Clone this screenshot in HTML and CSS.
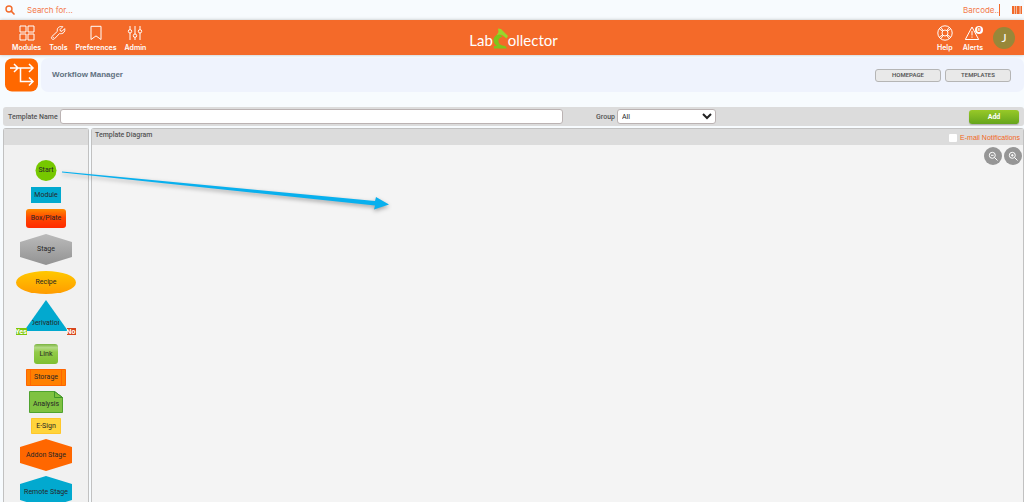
FILE: index.html
```html
<!DOCTYPE html>
<html lang="en">
<head>
<meta charset="utf-8">
<title>LabCollector - Workflow Manager</title>
<link rel="stylesheet" href="styles.css">
</head>
<body>
<div class="search-bar">
  <label class="search">
    <svg class="search-icon" viewBox="0 0 10 10" aria-label="Search"><circle cx="4" cy="4" r="3" fill="none" stroke="currentColor" stroke-width="1.4"/><path d="M6.2 6.2 9 9" stroke="currentColor" stroke-width="1.7" stroke-linecap="round"/></svg>
    <input type="text" placeholder="Search for...">
  </label>
  <label class="barcode">
    <input type="text" placeholder="Barcode...">
    <svg class="barcode-icon" viewBox="0 0 10 8" aria-label="Scan barcode"><path d="M0 0h2v8H0zM3 0h1v8H3zM5 0h2v8H5zM7.6 0h.6v8h-.6zM9 0h1v8H9z" fill="currentColor"/><path d="M0 0h10v8H0z" fill="currentColor" opacity=".45"/></svg>
  </label>
</div>

<header class="main-bar">
  <nav class="menu">
    <a href="#">
      <svg viewBox="0 0 16 16"><path d="M1 1h6v6H1zM9 1h6v6H9zM1 9h6v6H1zM9 9h6v6H9z"/></svg>
      <span>Modules</span>
    </a>
    <a href="#">
      <svg viewBox="0 0 16 16"><path d="M12.800 1.700 10.100 4.400l.3 1.600 1.600.3 2.700-2.700c.7 2.300-.8 4.900-3.400 5.100-.6.1-1.200 0-1.700-.2l-5.200 5.400c-1.700 1.500-4-.7-2.500-2.400l5.500-5.200C6.500 3.200 9.300.7 12.800 1.700z"/><circle cx="3.300" cy="12.700" r=".3"/></svg>
      <span>Tools</span>
    </a>
    <a href="#">
      <svg viewBox="0 0 16 16"><path d="M3 1.300h10v13.200l-5-3.600-5 3.600z"/></svg>
      <span>Preferences</span>
    </a>
    <a href="#">
      <svg viewBox="0 0 16 16"><path d="M3 1v3.500M3 8v7M8 1v8M8 12.500V15M13 1v3.500M13 8v7"/><circle cx="3" cy="6.300" r="1.700"/><circle cx="8" cy="10.700" r="1.700"/><circle cx="13" cy="6.300" r="1.700"/></svg>
      <span>Admin</span>
    </a>
  </nav>
  <a class="brand" href="#">
    <span>Lab</span>
    <svg class="brand-mark" viewBox="0 0 15 21" aria-hidden="true"><path d="M6 6C-1 8-1 14.500 4 18H1v2.500h13L12.500 18C5 18 2.500 11 9.500 8.500z" fill="#7fc41c"/><path d="m5 .5 3 .5 7 7-1.500 2.500L9 7 6 6.500 3.500 7.500 5.500 4z" fill="#98d62c"/></svg>
    <span>ollector</span>
  </a>
  <nav class="menu account">
    <a href="#">
      <svg viewBox="0 0 16 16"><circle cx="8" cy="8" r="7.200"/><circle cx="8" cy="8" r="3"/><path d="m2.500 4 3.300 2.300M4 2.500l2.300 3.300M12 2.500 9.700 5.800M13.500 4l-3.300 2.300M2.500 12l3.300-2.300M4 13.500l2.300-3.300M13.500 12l-3.300-2.300M12 13.500l-2.300-3.300"/></svg>
      <span>Help</span>
    </a>
    <a href="#" class="alerts">
      <svg viewBox="0 0 16 16"><path d="M7 2 .3 14.500h13.400zM7 6v4.500M7 11.500v1.200"/></svg>
      <b class="badge">0</b>
      <span>Alerts</span>
    </a>
    <a href="#" class="avatar">J</a>
  </nav>
</header>

<section class="page-head">
  <svg class="page-icon" viewBox="0 0 33 33" aria-hidden="true"><rect width="33" height="33" rx="7" fill="#ff6800"/><path d="M5 9.500h23M15.500 9.500V23H28M9 5.500l4 4-4 4M24 5.500l4 4-4 4M24 19l4 4-4 4" fill="none" stroke="#fff" stroke-width="1.500"/></svg>
  <div class="page-title">
    <h1>Workflow Manager</h1>
    <button type="button">HOMEPAGE</button>
    <button type="button">TEMPLATES</button>
  </div>
</section>

<main>
  <form class="template-form">
    <label for="name">Template Name</label>
    <input id="name" type="text">
    <label for="group" class="group-label">Group</label>
    <select id="group"><option>All</option></select>
    <button type="button">Add</button>
  </form>

  <div class="workspace">
    <section class="panel">
      <div class="panel-head"></div>
      <div class="palette">
        <div class="shapes">
          <svg width="22" height="21"><circle cx="11" cy="10.500" r="10.500" fill="#76c800"/><text x="11" y="12">Start</text></svg>
          <svg width="30" height="16"><rect width="30" height="16" fill="#02a9cf"/><text x="15" y="10">Module</text></svg>
          <svg width="40" height="19"><defs><linearGradient id="red" x2="0" y2="1"><stop stop-color="#ff8a00"/><stop offset=".45" stop-color="#ff4800"/><stop offset="1" stop-color="#ff2a00"/></linearGradient></defs><rect width="40" height="19" rx="3" fill="url(#red)"/><text x="20" y="11">Box/Plate</text></svg>
          <svg width="52" height="31"><defs><linearGradient id="grey" x2="0" y2="1"><stop stop-color="#bbb"/><stop offset="1" stop-color="#929292"/></linearGradient></defs><path d="m26 0 26 8v15l-26 8-26-8V8z" fill="url(#grey)"/><text x="26" y="17">Stage</text></svg>
          <svg width="60" height="23"><defs><linearGradient id="gold" x2="0" y2="1"><stop stop-color="#ffc800"/><stop offset="1" stop-color="#ff9c00"/></linearGradient></defs><ellipse cx="30" cy="11.500" rx="30" ry="11.500" fill="url(#gold)"/><text x="30" y="13">Recipe</text></svg>
          <svg width="60" height="38"><defs><clipPath id="label-box"><path d="M16 16h27v14H16z"/></clipPath></defs><path d="m30 0 22 31H8z" fill="#02a9cf"/><g clip-path="url(#label-box)"><text x="30" y="25">Derivation</text></g><path d="M0 28h11v7H0z" fill="#7cc60c"/><path d="M51 28h9v7h-9z" fill="#d8451c"/><text class="tag" x="5" y="34">Yes</text><text class="tag" x="55" y="34">No</text></svg>
        </div>
        <div class="shapes compact">
          <svg width="24" height="20"><defs><linearGradient id="green" x2="0" y2="1"><stop stop-color="#7ab340"/><stop offset=".18" stop-color="#b4da86"/><stop offset=".4" stop-color="#93cb49"/><stop offset="1" stop-color="#7ebf32"/></linearGradient></defs><rect width="24" height="20" rx="3" fill="url(#green)"/><text x="12" y="12">Link</text></svg>
          <svg width="40" height="17"><path d="M.5.500h39v16H.5zM4.500.500v16M35.500.500v16" fill="#ff8000" stroke="#ff6500"/><text x="20" y="10">Storage</text></svg>
          <svg width="34" height="22"><path d="M.5.500h25l8 6v15H.5z" fill="#7fc241" stroke="#4fa32e"/><path d="M25.500.500v6h8z" fill="#7fc241" stroke="#3f932a"/><text x="17" y="15">Analysis</text></svg>
          <svg width="30" height="16"><path d="M.5.500h29v15H.5z" fill="#ffd43b" stroke="#ffc72a"/><text x="15" y="10">E-Sign</text></svg>
          <svg width="52" height="32"><path d="m26 0 26 8v16l-26 8-26-8V8z" fill="#ff6700"/><text x="26" y="18">Addon Stage</text></svg>
          <svg width="52" height="32"><path d="m26 0 26 8v16l-26 8-26-8V8z" fill="#02a9cf"/><text x="26" y="18">Remote Stage</text></svg>
        </div>
      </div>
    </section>
    <section class="panel diagram">
      <div class="panel-head">
        <h2>Template Diagram</h2>
        <label class="notify"><input type="checkbox">E-mail Notifications</label>
      </div>
      <div class="zoom-tools">
        <button type="button" aria-label="Zoom out"><svg viewBox="0 0 10 10"><circle cx="4.300" cy="4.300" r="3"/><path d="m6.500 6.500 3 3M3 4.300h2.600"/></svg></button>
        <button type="button" aria-label="Zoom in"><svg viewBox="0 0 10 10"><circle cx="4.300" cy="4.300" r="3"/><path d="m6.500 6.500 3 3M3 4.300h2.600M4.300 3v2.600"/></svg></button>
      </div>
    </section>
    <svg class="drag-arrow" viewBox="0 0 340 60" aria-hidden="true"><path d="M8 15.500 321 45l1-4 13 7.500-15 5 1-4L8 16.500z" fill="#08b0ee"/></svg>
  </div>
</main>
</body>
</html>
```
FILE: styles.css
```css
* { box-sizing: border-box; }
body {
  margin: 0;
  min-height: 100vh;
  display: flex;
  flex-direction: column;
  overflow: hidden;
  background: #f7fbfe;
  color: #555;
  font: 7px/10px Roboto, sans-serif;
}
a { color: inherit; text-decoration: none; }
h1, h2 { margin: 0; }
input, select, button { font: inherit; color: inherit; }

.search-bar {
  display: flex;
  justify-content: space-between;
  align-items: center;
  height: 20px;
  padding: 0 2px 0 5px;
  color: #f26a2a;
  font: 8px/12px Inter, sans-serif;
}
.search, .barcode { display: flex; align-items: center; }
.search { gap: 12px; }
.barcode { gap: 12px; }
.search-bar input {
  padding: 0;
  border: 0;
  background: none;
  outline: 0;
}
.search input { width: 200px; }
.barcode input { width: 37px; border-right: 1px solid #f26a2a; }
.search-bar input::placeholder { color: #f4794a; opacity: 1; }
.search-icon { width: 10px; height: 10px; }
.barcode-icon { width: 10px; height: 8px; }

.main-bar {
  display: grid;
  grid-template-columns: 1fr auto 1fr;
  align-items: center;
  height: 35px;
  padding: 0 9px 0 12px;
  background: #f46a29;
  color: #fff;
  box-shadow: 0 0 3px #8888;
}
.menu { display: flex; align-items: center; gap: 8px; }
.menu a {
  display: flex;
  flex-direction: column;
  align-items: center;
  gap: 2px;
  padding-top: 2px;
  font: 600 7px/10px Inter, sans-serif;
}
.menu svg {
  width: 16px;
  height: 16px;
  fill: none;
  stroke: #fff;
  stroke-width: 1;
  stroke-linejoin: round;
}
.account { justify-content: flex-end; gap: 10px; }
.menu .alerts { position: relative; }
.badge {
  position: absolute;
  top: 3px;
  right: 0;
  width: 8px;
  height: 8px;
  border-radius: 50%;
  background: #fff;
  color: #f46a29;
  font: 700 7px/8px Roboto, sans-serif;
  text-align: center;
}
.menu .avatar {
  justify-content: center;
  width: 22px;
  height: 22px;
  padding: 0;
  border-radius: 50%;
  background: #988739;
  font: 12px/22px Lato, sans-serif;
}
.brand {
  display: flex;
  align-items: flex-end;
  padding-top: 1px;
  font: 400 15px/18px Lato, sans-serif;
}
.brand-mark { width: 15px; height: 21px; }

.page-head {
  display: flex;
  gap: 3px;
  padding: 3px 0 0 5px;
}
.page-icon { flex: none; width: 33px; height: 34px; }
.page-title {
  flex: 1;
  display: flex;
  align-items: center;
  gap: 4px;
  height: 34px;
  padding: 0 13px 0 11px;
  border-radius: 7px;
  background: #eff3fd;
}
.page-title h1 {
  flex: 1;
  color: #607080;
  font: 700 8px/12px "Liberation Sans", sans-serif;
}
.page-title button {
  width: 66px;
  height: 13px;
  padding: 0;
  border: 1px solid #b5b5b5;
  border-radius: 3px;
  background: #e9e9e9;
  font: 600 6px/10px Roboto, sans-serif;
}

main {
  flex: 1;
  display: flex;
  flex-direction: column;
  gap: 2px;
  padding: 15px 0 0 3px;
}
.template-form {
  display: flex;
  align-items: center;
  gap: 2px;
  height: 19px;
  padding: 0 5px;
  border-radius: 3px;
  background: #dcdcdc;
  font-weight: 500;
}
.template-form input, .template-form select {
  height: 15px;
  padding: 0;
  border: 1px solid #bbb3b3;
  border-radius: 3px;
  background: #fff;
}
.template-form input { flex: 505; min-width: 0; }
.group-label { margin-left: 31px; }
.template-form select { width: 99px; color: #222; font-weight: 400; }
.template-form button {
  width: 50px;
  height: 14px;
  margin-left: 251px;
  padding: 0;
  border: 0;
  border-radius: 3px;
  background: linear-gradient(#98c928, #65a51d);
  box-shadow: 0 1px 1px #7777;
  color: #fff;
  font-weight: 700;
}

.workspace {
  position: relative;
  flex: 1;
  display: grid;
  grid-template-columns: 86px 1fr;
  gap: 2px;
}
.panel {
  border: 1px solid #c1c1c1;
  border-width: 1px 1px 0;
  border-radius: 3px 3px 0 0;
  background: #f1f1f1;
}
.diagram { background: #f4f4f4; }
.panel-head {
  display: flex;
  justify-content: space-between;
  height: 16px;
  padding: 1px 3px 0;
  background: #dcdcdc;
}
.panel-head h2 { font: 500 7px/10px Roboto, sans-serif; }
.notify {
  display: flex;
  align-items: center;
  gap: 3px;
  color: #f26522;
  font-family: "Liberation Sans", sans-serif;
}
.notify input {
  appearance: none;
  width: 8px;
  height: 8px;
  margin: 0;
  border-radius: 1px;
  background: #fff;
}
.palette {
  display: flex;
  flex-direction: column;
  gap: 6px;
  height: 356px;
  padding-top: 15px;
}
.shapes {
  display: flex;
  flex-direction: column;
  align-items: center;
  gap: 6px;
}
.compact { gap: 5px; }
.palette svg { display: block; flex: none; }
.palette text {
  fill: #262626;
  font: 7px Roboto, sans-serif;
  text-anchor: middle;
}
.palette .tag { fill: #fff; font-weight: 700; }
.zoom-tools {
  display: flex;
  justify-content: flex-end;
  gap: 2px;
  padding: 2px 1px;
}
.zoom-tools button {
  display: grid;
  place-items: center;
  width: 18px;
  height: 18px;
  padding: 0;
  border: 0;
  border-radius: 50%;
  background: #969696;
}
.zoom-tools svg { width: 10px; height: 10px; fill: none; stroke: #fff; stroke-width: 1; }

.drag-arrow {
  position: absolute;
  left: 51px;
  top: 28px;
  width: 340px;
  height: 60px;
  filter: drop-shadow(0 2px 2px #0005);
}
```
